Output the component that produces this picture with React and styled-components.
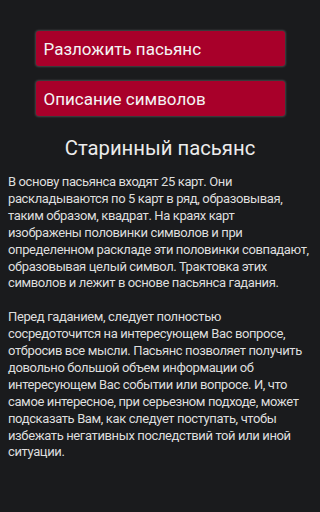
import React from 'react';
import styled, { createGlobalStyle } from 'styled-components';

const Global = createGlobalStyle`
  html, body {
    margin: 0;
    padding: 0;
    background: #1a1b1d;
  }
  body {
    font-family: Roboto, "Noto Sans", sans-serif;
  }
`;

const Screen = styled.div`
  width: 320px;
  height: 512px;
  background: #1a1b1d;
  box-sizing: border-box;
  padding-top: 31px;
  display: flex;
  flex-direction: column;
  overflow: hidden;
`;

const Menu = styled.div`
  display: flex;
  flex-direction: column;
  align-items: center;
  gap: 15px;
`;

const MenuButton = styled.div`
  width: 249px;
  height: 35px;
  box-sizing: border-box;
  background: #a8002a;
  border-radius: 3px;
  box-shadow: 0 0 2px 1px rgba(200, 200, 200, 0.25);
  color: #f4f4f4;
  font-size: 17px;
  display: flex;
  align-items: center;
  padding-left: 8px;
`;

const Title = styled.h1`
  margin: 20px 0 0;
  font-weight: 400;
  font-size: 20.3px;
  color: #ececec;
  text-align: center;
  line-height: 24px;
`;

const Body = styled.div`
  margin-top: 14px;
  padding: 0 4px 0 8px;
  color: #dedede;
  font-size: 13px;
  line-height: 16.9px;
  letter-spacing: -0.38px;
`;

// lines break where the original app wrapped them
const Para = styled.p`
  margin: 0 0 16.9px;
  white-space: pre-line;
`;

const first = `В основу пасьянса входят 25 карт. Они
раскладываются по 5 карт в ряд, образовывая,
таким образом, квадрат. На краях карт
изображены половинки символов и при
определенном раскладе эти половинки совпадают,
образовывая целый символ. Трактовка этих
символов и лежит в основе пасьянса гадания.`;

const second = `Перед гаданием, следует полностью
сосредоточится на интересующем Вас вопросе,
отбросив все мысли. Пасьянс позволяет получить
довольно большой объем информации об
интересующем Вас событии или вопросе. И, что
самое интересное, при серьезном подходе, может
подсказать Вам, как следует поступать, чтобы
избежать негативных последствий той или иной
ситуации.`;

export default function App() {
  return (
    <Screen>
      <Global />
      <Menu>
        <MenuButton>Разложить пасьянс</MenuButton>
        <MenuButton>Описание символов</MenuButton>
      </Menu>
      <Title>Старинный пасьянс</Title>
      <Body>
        <Para>{first}</Para>
        <Para>{second}</Para>
      </Body>
    </Screen>
  );
}
